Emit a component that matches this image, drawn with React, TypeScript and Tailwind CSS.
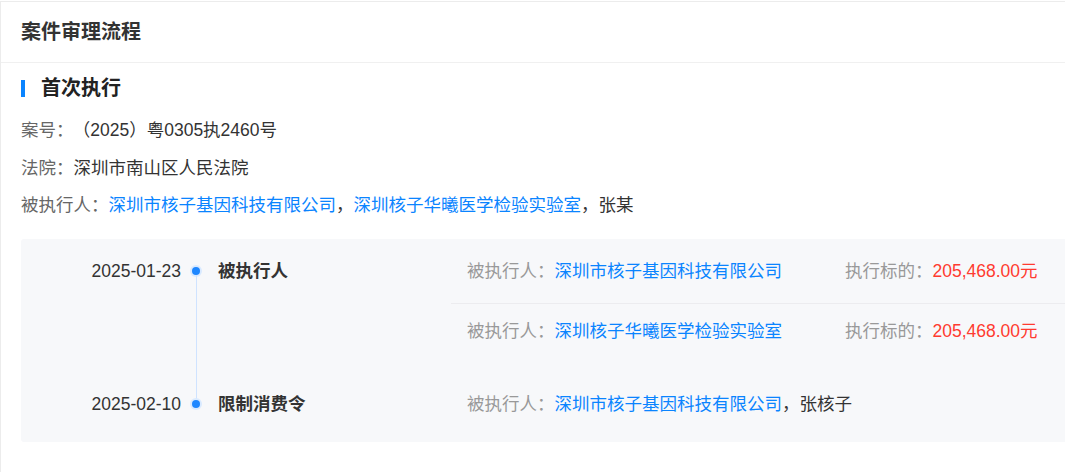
import React from 'react'

const font = { fontFamily: '"Liberation Sans", "Noto Sans CJK SC", sans-serif' }

interface Party {
  name: string
  amount?: string
}

interface Step {
  date: string
  title: string
  parties: Party[]
  extra?: string
}

const steps: Step[] = [
  {
    date: '2025-01-23',
    title: '被执行人',
    parties: [
      { name: '深圳市核子基因科技有限公司', amount: '205,468.00元' },
      { name: '深圳核子华曦医学检验实验室', amount: '205,468.00元' },
    ],
  },
  {
    date: '2025-02-10',
    title: '限制消费令',
    parties: [{ name: '深圳市核子基因科技有限公司' }],
    extra: '张核子',
  },
]

function Dot() {
  return <div className="w-[8px] h-[8px] rounded-full bg-[#1e87ff] ring-2 ring-[#d9eaff] shrink-0" />
}

export default function App() {
  return (
    <div className="w-[1065px] h-[472px] overflow-hidden bg-white pt-px text-[17.5px] leading-[25px]" style={font}>
      <div className="w-[1100px] h-full border-t border-l border-[#ececec] bg-white">
        <div className="h-[61px] pt-px px-5 flex items-center border-b border-[#f0f0f0]">
          <h2 className="text-[20px] font-bold text-[#333]">案件审理流程</h2>
        </div>

        <div className="pl-5 pt-[13px]">
          <div className="flex items-center gap-4 h-[25px]">
            <span className="w-[4px] h-[17px] bg-[#0a84ff]" />
            <h3 className="text-[20px] font-bold text-[#222]">首次执行</h3>
          </div>

          <div className="mt-[17px] flex flex-col gap-[12.5px] text-[#333]">
            <p><span className="text-[#666]">案号：</span><span className="pl-[8px]">（2025）粤0305执2460号</span></p>
            <p><span className="text-[#666]">法院：</span>深圳市南山区人民法院</p>
            <p>
              <span className="text-[#666]">被执行人：</span>
              <span className="text-[#0a84ff]">深圳市核子基因科技有限公司</span>，
              <span className="text-[#0a84ff]">深圳核子华曦医学检验实验室</span>，张某
            </p>
          </div>

          <div className="mt-[21px] w-[1060px] h-[203px] rounded-[3px] bg-[#f7f8fa]">
            {steps.map((step, i) => {
              const first = i === 0
              return (
                <div key={step.date} className={`flex ${first ? 'h-[120px]' : 'h-[76px] pt-[14px]'}`}>
                  <div className={`w-[160px] flex items-center justify-end text-[#333] ${first ? 'h-[64px]' : 'h-[62px]'}`}>{step.date}</div>
                  {first ? (
                    <div className="w-[30px] flex flex-col items-center">
                      <div className="h-[28px]" />
                      <Dot />
                      <div className="w-px flex-1 bg-[#cfe3ff]" />
                    </div>
                  ) : (
                    <div className="w-[30px] -mt-[14px] flex flex-col items-center">
                      <div className="w-px h-[41px] bg-[#cfe3ff]" />
                      <Dot />
                    </div>
                  )}
                  <div className={`w-[240px] pl-[7px] flex items-center font-bold text-[#333] ${first ? 'h-[64px]' : 'h-[62px]'}`}>{step.title}</div>
                  <div className="flex-1 flex flex-col">
                    {step.parties.map((p, j) => (
                      <div
                        key={p.name}
                        className={`pl-4 flex items-center whitespace-nowrap ${j === 0 ? (first ? 'h-[64px]' : 'h-[62px]') : 'h-[56px] border-t border-[#ececef]'}`}
                      >
                        <div className={p.amount ? 'w-[378px] shrink-0' : ''}>
                          <span className="text-[#999]">被执行人：</span>
                          <span className="text-[#0a84ff]">{p.name}</span>
                          {step.extra && <span className="text-[#333]">，{step.extra}</span>}
                        </div>
                        {p.amount && (
                          <div>
                            <span className="text-[#999]">执行标的：</span>
                            <span className="text-[#ff3b30]">{p.amount}</span>
                          </div>
                        )}
                      </div>
                    ))}
                  </div>
                </div>
              )
            })}
          </div>
        </div>
      </div>
    </div>
  )
}
